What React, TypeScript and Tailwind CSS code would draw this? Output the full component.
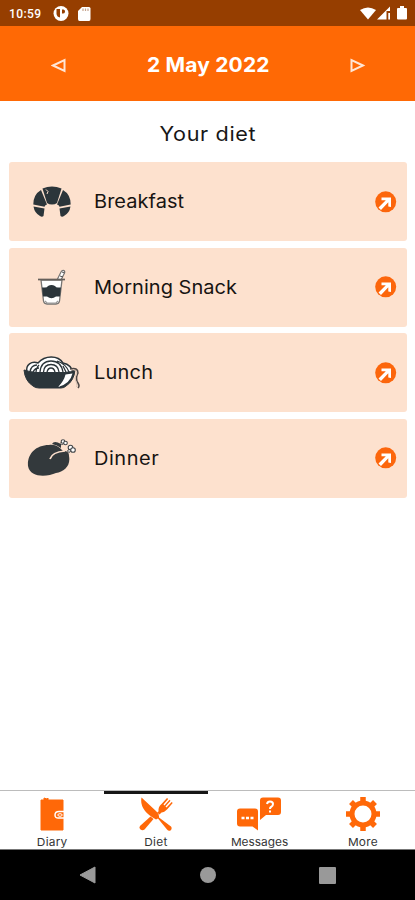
import type { ReactNode } from "react";

const CroissantIcon = () => (
  <svg width="38" height="32" viewBox="0 0 38 32" fill="#2b353a">
    <path d="M9.500 2.500Q19-1.500 28.500 2.500L24 17Q22 18.500 19 18.500T14 17Z" />
    <path d="M8 4L14 18.500Q12 19 11.500 20.700L0.300 18.500Q0.300 8.500 8 4Z" />
    <path d="M30 4L24 18.500Q26 19 26.500 20.700L37.700 18.500Q37.700 8.500 30 4Z" />
    <path d="M0.500 20.500L11.500 22.500L10.500 30Q9 31.500 7 30Q1.500 27 0.500 20.500Z" />
    <path d="M37.500 20.500L26.500 22.500L27.500 30Q29 31.500 31 30Q36.500 27 37.500 20.500Z" />
    <path d="M13 3.500L15 5.500L14 8" fill="none" stroke="#fde1ce" strokeWidth="1" />
  </svg>
);

const CupIcon = () => (
  <svg width="30" height="36" viewBox="0 0 30 36" fill="none">
    <path d="M20 11L24 3Q25 1 27 1.500Q28.500 3 27 5L24 11" fill="#fff" stroke="#777573" strokeWidth="1.200" />
    <path d="M23 7L26 8M25 3L27.500 4" stroke="#555" />
    <path d="M4 11H25L22.500 32Q22 35 19 35H10Q7 35 6.500 32Z" fill="#fff" stroke="#777573" strokeWidth="1.300" />
    <path d="M1 10.500H28" stroke="#655f5a" strokeWidth="1.700" />
    <path d="M5 18.500H8Q10 18.500 11 17Q14.500 15 18 17Q19 18.500 21 18.500H24L23 27.500H19Q14.500 31 10 27.500H6Z" fill="#2b353a" />
    <path d="M8 32L10 34H19L21 32" stroke="#999" strokeWidth="1.200" />
  </svg>
);

const NoodlesIcon = () => (
  <svg width="58" height="34" viewBox="0 0 58 34" fill="none">
    <path d="M4 17C2 8 9 5 15 7C22-1 35-1 40 7C45 8 49 11 50 17Z" fill="#fff" stroke="#2b353a" strokeWidth="1.500" />
    <path d="M7 16Q8 9 14 9M10 16Q12 12 16 12M16 9Q13 12 13 17M17 16Q18 5 28 5T40 16M20.500 16Q21 8.500 28 8.500T36 16M24 16Q25 12 28 12T32 16M34 5Q43 8 46 16M40 10L43 16" stroke="#2b353a" strokeWidth="1.300" />
    <path d="M1 14Q7 16 14 16.500H42Q48 16 52 14Q51 25 43 30Q41 32 38 32H16Q12 32 10 30Q2 25 1 14Z" fill="#2b353a" stroke="#2b353a" />
    <path d="M49.500 17.500Q47 28 35 31Q41 25 42.500 18.500Z" fill="#fff" />
    <path d="M47 13Q55 11 55 17Q52 23 55 27Q57 30 55 32" stroke="#4d4745" strokeWidth="1.500" />
    <path d="M48 14Q53.500 13 53.500 17Q50.500 23 53.500 27Q54.500 30 53.500 31" stroke="#d8c2b4" strokeWidth="1" />
  </svg>
);

const ChickenIcon = () => (
  <svg width="50" height="38" viewBox="0 0 50 38" fill="none">
    <path d="M1 27C0 16 8 6 22 6C29 5 33 9 36 12C40 12 42 13 42 17C44 27 37 33 29 34C20 38 3 39 1 27Z" fill="#33393c" />
    <path d="M23 20Q25 13 38 12" stroke="#fde1ce" strokeWidth="1.700" />
    <path d="M25 5Q27 1 34 5L34 9Q30 6 25 5Z" fill="#33393c" />
    <path d="M34 5L37 3M41 13L44 10" stroke="#33393c" strokeWidth="3" />
    <path d="M34.500 5L37 3M41.500 12.500L44 10" stroke="#fff" strokeWidth="1.500" />
    <g fill="#fff" stroke="#434749" strokeWidth="1.100">
      <circle cx="36" cy="2.500" r="1.800" />
      <circle cx="38.500" cy="4" r="1.800" />
      <circle cx="43.500" cy="8.500" r="2.300" />
      <circle cx="46" cy="11" r="2.300" />
    </g>
  </svg>
);

const ArrowBadge = () => (
  <svg width="22" height="22" viewBox="0 0 22 22">
    <circle cx="10.700" cy="10.800" r="10.500" fill="#fc660c" />
    <path d="M6.500 6.500H16V16L13.300 15.500V11.300L6 19L3.500 16.500L10.800 9.200H6.500Z" fill="#fff" />
  </svg>
);

const DiaryIcon = () => (
  <svg width="24" height="34" viewBox="0 0 24 34">
    <path d="M1 3H4V1L7 2L8 1V3H23V33H1Z" fill="#ff6808" stroke="#ff6808" />
    <path d="M24 14.500H19Q15 14.500 15 18T19 21H24" fill="none" stroke="#fff" strokeWidth="1.500" />
    <ellipse cx="20" cy="18" rx="2.200" ry="1.300" fill="none" stroke="#fff" />
  </svg>
);

const DietIcon = () => (
  <svg width="34" height="34" viewBox="0 0 34 34" fill="#ff6808">
    <path d="M11.500 19.500L14.500 22L5.500 32.500Q3.500 34 1.500 32.500Q-0.500 30.500 1.500 28.500Z" />
    <path d="M19.500 14.500Q19 9.500 22.500 7L28 1L29.200 2L24.500 7.500L25.500 8.500L30.500 2.800L31.500 3.800L26.500 9.500L27.500 10.500L32.700 5L33.700 6L28.500 12Q25 15.500 22.500 15.500L20.500 17.500L18 15.500Z" />
    <path d="M2.500 0.500L17 14Q20.500 17 20 20.500L32 29.500Q33.500 31.500 31.500 33.500Q29.500 34.500 28 32.500L19 21.500L17 22.500Q0 13 2.500 0.500Z" />
  </svg>
);

const MessagesIcon = () => (
  <svg width="44" height="34" viewBox="0 0 44 34">
    <path d="M3 11.500H18Q21 11.500 21 14.500V33.500L15.500 29.500H3Q0 29.500 0 26.500V14.500Q0 11.500 3 11.500Z" fill="#ff6808" />
    <path d="M26 0.500H41Q44 0.500 44 3.500V15Q44 18 41 18H29L23 23V3.500Q23 0.500 26 0.500Z" fill="#ff6808" />
    <path d="M4.500 21H7.500M9 21H12M13.500 21H16.500" stroke="#fff" strokeWidth="2.300" />
    <path d="M30 7Q30.500 4.500 33 4.500Q36 4.500 36 7Q36 9 34 10Q33 10.500 33 12M33 13.500V15.500" fill="none" stroke="#fff" strokeWidth="2" />
  </svg>
);

const MoreIcon = () => (
  <svg width="34" height="34" viewBox="0 0 34 34">
    <g stroke="#ff6808" strokeWidth="5.500" strokeLinejoin="round">
      <path d="M17 0V34M0 17H34M5 5L29 29M29 5L5 29" />
    </g>
    <circle cx="17" cy="17" r="11" fill="#fff" stroke="#ff6808" strokeWidth="5" />
  </svg>
);

interface Meal {
  name: string;
  icon: ReactNode;
  text: string;
}

const meals: Meal[] = [
  { name: "Breakfast", icon: <CroissantIcon />, text: "tracking-[0.05px]" },
  { name: "Morning Snack", icon: <CupIcon />, text: "tracking-[0.05px]" },
  { name: "Lunch", icon: <NoodlesIcon />, text: "tracking-[0.2px]" },
  { name: "Dinner", icon: <ChickenIcon />, text: "tracking-[0.5px]" },
];

const tabs = [
  { name: "Diary", icon: <DiaryIcon />, text: "tracking-[0.2px]" },
  { name: "Diet", icon: <DietIcon />, text: "tracking-[0.3px]" },
  { name: "Messages", icon: <MessagesIcon />, text: "tracking-[0px]" },
  { name: "More", icon: <MoreIcon />, text: "tracking-[0.2px]" },
];

const StatusBar = () => (
  <div className="flex h-[26px] items-center bg-[#963e00] pt-0.5 pl-[9px] pr-[7px] text-white">
    <span className="w-[34px] whitespace-nowrap font-[Roboto] text-[12px] font-medium leading-none tracking-[0.4px]">10:59</span>
    <svg className="ml-[10px]" width="16" height="16" viewBox="0 0 16 16">
      <circle cx="8" cy="7.500" r="7.500" fill="#fff" />
      <path d="M3.500 3H7V11.500Q4 11 3.500 8ZM9 3.500H10.500Q12.500 4 12 6T9 7.500Z" fill="#963e00" />
    </svg>
    <svg className="ml-[9px]" width="13" height="14" viewBox="0 0 13 14">
      <path d="M4 0H11Q12.500 0 12.500 1.500V12Q12.500 14 11 14H1.500Q0 14 0 12V4Z" fill="#fff" />
      <path d="M5 1.500V4M7.500 1.500V4M10 1.500V4" stroke="#c6a48e" strokeWidth="1.200" />
    </svg>
    <div className="ml-auto flex items-center">
      <svg width="48" height="16" viewBox="0 0 48 16" fill="#fff">
        <path d="M0 4Q8-1 16 4L8 13.500Z" />
        <path d="M17 13.500L30 0.500V5H26.500V13.500ZM28.300 7H30V13.500H28.300Z" />
        <path d="M38 2H40V0H44V2H46Q47 2 47 3V12.500Q47 13.500 46 13.500H38Q37 13.500 37 12.500V3Q37 2 38 2Z" />
      </svg>
    </div>
  </div>
);

export default function App() {
  return (
    <div className="flex h-[900px] w-[415px] flex-col overflow-hidden bg-white font-['Inter',sans-serif]">
      <StatusBar />

      <header className="flex h-[75px] shrink-0 items-center justify-between bg-[#ff6905] pl-[51px] pr-[49px] pt-[3px] text-white">
        <svg width="16" height="16" viewBox="0 0 16 16" fill="none" stroke="#ffe5d5" strokeWidth="2">
          <path d="M2 8.500L13.500 3V14Z" />
        </svg>
        <h1 className="scale-x-105 whitespace-nowrap text-[20px] font-bold tracking-[0.15px]">2 May 2022</h1>
        <svg width="16" height="16" viewBox="0 0 16 16" fill="none" stroke="#ffe5d5" strokeWidth="2">
          <path d="M13 8.500L1.500 3V14Z" />
        </svg>
      </header>

      <main className="flex-1 pl-[9px] pr-[8px]">
        <h2 className="flex h-[61px] items-center justify-center pt-[4px] text-[20px] tracking-[0.6px] text-[#171717]">
          <span className="scale-x-108">Your diet</span>
        </h2>
        <div className="flex flex-col gap-[6.5px]">
          {meals.map((meal) => (
            <div key={meal.name} className="flex h-[79px] items-center rounded-[3px] bg-[#fde1ce] pr-[10px]">
              <div className="flex w-[85px] items-center justify-center">{meal.icon}</div>
              <span className={`flex-1 origin-left scale-x-108 pt-px text-[18.5px] text-[#171412] ${meal.text}`}>{meal.name}</span>
              <ArrowBadge />
            </div>
          ))}
        </div>
      </main>

      {/* Bottom tabs */}
      <nav className="grid h-[60px] shrink-0 grid-cols-4 border-t border-b border-t-[#bcbcbc] border-b-[#777]">
        {tabs.map((tab) => (
          <div key={tab.name} className="relative flex flex-col items-center pt-[6px]">
            {tab.name === "Diet" && <div className="absolute inset-x-0 top-0 h-[3px] bg-[#171717]" />}
            {tab.icon}
            <span className={`mt-[4px] scale-x-108 text-[11px] leading-[14px] text-[#353535] ${tab.text}`}>{tab.name}</span>
          </div>
        ))}
      </nav>

      {/* System navigation */}
      <div className="flex h-[50px] shrink-0 items-center justify-between bg-black pl-[79px] pr-[79px]">
        <svg width="17" height="18" viewBox="0 0 17 18" fill="#999">
          <path d="M1 9L16 1V17Z" stroke="#999" strokeLinejoin="round" />
        </svg>
        <div className="size-4 rounded-full bg-[#999]" />
        <div className="size-[17px] rounded-[1px] bg-[#999]" />
      </div>
    </div>
  );
}
